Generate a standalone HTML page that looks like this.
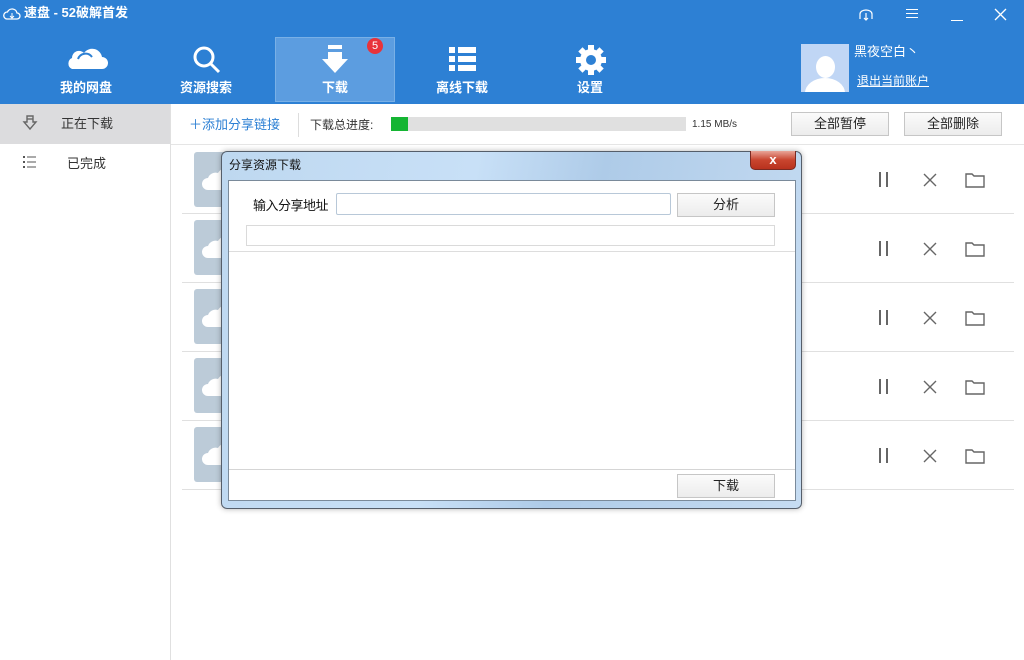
<!DOCTYPE html><html><head><meta charset="utf-8"><style>
*{margin:0;padding:0;box-sizing:border-box}
body{width:1024px;height:660px;overflow:hidden;background:#fff;font-family:"Liberation Sans","Noto Sans CJK SC",sans-serif;font-size:12px;color:#333;position:relative;line-height:1.2}
.a{position:absolute}
.hdr{left:0;top:0;width:1024px;height:104px;background:#2d80d4}
.nav{top:37px;width:120px;height:65px;color:#fff;font-weight:bold;font-size:13px;text-align:center}
.nav span{position:absolute;left:0;right:0;top:42px;line-height:18px}
.btn{background:linear-gradient(#fbfbfb,#ececec);border:1px solid #c6c6c6;text-align:center;font-size:13px;color:#222}
.row{left:182px;width:832px;height:1px;background:#e0e0e0}
.th{left:194px;width:55px;height:55px;background:#bccbd8;border-radius:3px;overflow:hidden}
.ic{stroke:#666;fill:none;stroke-width:1.4}
.t{line-height:18px}
</style></head><body>
<div class="a hdr"></div>
<svg class="a" style="left:3px;top:6px" width="18" height="16" viewBox="0 0 18 16"><path d="M4 13h10a3 3 0 0 0 0-6 5 5 0 0 0-9.5-1A3.5 3.5 0 0 0 4 13z" stroke="#fff" fill="none" stroke-width="1.3"/><path d="M9 7v5M7 10l2 2 2-2" stroke="#fff" fill="none"/></svg>
<div class="a t" style="left:24px;top:4px;color:#fff;font-weight:bold;font-size:13px">速盘 - 52破解首发</div>
<svg class="a" style="left:858px;top:9px" width="16" height="12"><path d="M2 10V5a6 4 0 0 1 12 0v5M8 4v7M6 9l2 2 2-2" stroke="#fff" fill="none" stroke-width="1.2"/></svg>
<div class="a" style="left:906px;top:9px;width:12px;height:9px;border-top:1px solid #fff;border-bottom:1px solid #fff"><div style="margin-top:3px;height:1px;background:#fff"></div></div>
<div class="a" style="left:951px;top:20px;width:12px;height:1px;background:#fff"></div>
<svg class="a" style="left:994px;top:8px" width="13" height="13"><path d="M1 1l11 11M12 1L1 12" stroke="#fff" stroke-width="1.3"/></svg>
<div class="a" style="left:275px;top:37px;width:120px;height:65px;background:#5c9de0;border:1px solid #79b0e6"></div>
<div class="a nav" style="left:26px"><svg class="a" style="left:38px;top:10px" width="44" height="26"><path d="M8 22h30a6 6 0 0 0 0-12 10 10 0 0 0-18-4 7 7 0 0 0-12 5 6 6 0 0 0 0 11z" fill="#fff"/><path d="M14 12a8 8 0 0 1 14-2" stroke="#2d80d4" stroke-width="2" fill="none"/></svg><span>我的网盘</span></div>
<div class="a nav" style="left:146px"><svg class="a" style="left:46px;top:8px" width="30" height="30"><circle cx="12" cy="12" r="9" stroke="#fff" stroke-width="3" fill="none"/><path d="M18 18l9 9" stroke="#fff" stroke-width="3"/></svg><span>资源搜索</span></div>
<div class="a nav" style="left:275px"><svg class="a" style="left:47px;top:8px" width="26" height="30"><rect x="6" y="0" width="14" height="4" fill="#fff"/><path d="M6 7h14v7h6L13 28 0 14h6z" fill="#fff"/></svg><span>下载</span></div>
<div class="a" style="left:367px;top:38px;width:16px;height:16px;border-radius:8px;background:#e8333a;color:#fff;font-size:11px;text-align:center;line-height:16px">5</div>
<div class="a nav" style="left:402px"><svg class="a" style="left:46px;top:8px" width="30" height="30"><g fill="#fff"><rect x="1" y="2" width="6" height="6"/><rect x="10" y="2" width="18" height="6"/><rect x="1" y="11" width="6" height="6"/><rect x="10" y="11" width="18" height="6"/><rect x="1" y="20" width="6" height="6"/><rect x="10" y="20" width="18" height="6"/></g></svg><span>离线下载</span></div>
<div class="a nav" style="left:530px"><svg class="a" style="left:45px;top:7px" width="32" height="32" viewBox="0 0 32 32"><g fill="#fff"><circle cx="16" cy="16" r="11"/><rect x="13" y="1" width="6" height="30"/><rect x="13" y="1" width="6" height="30" transform="rotate(45 16 16)"/><rect x="13" y="1" width="6" height="30" transform="rotate(90 16 16)"/><rect x="13" y="1" width="6" height="30" transform="rotate(135 16 16)"/></g><circle cx="16" cy="16" r="5" fill="#2d80d4"/></svg><span>设置</span></div>
<div class="a" style="left:801px;top:44px;width:48px;height:48px;background:#c0d6f5;overflow:hidden"><div class="a" style="left:15px;top:12px;width:19px;height:22px;border-radius:50%;background:#fff"></div><div class="a" style="left:4px;top:34px;width:40px;height:30px;border-radius:50%;background:#fff"></div></div>
<div class="a t" style="left:854px;top:43px;color:#fff;font-size:13px">黑夜空白丶</div>
<div class="a t" style="left:857px;top:72px;color:#fff;font-size:12px;text-decoration:underline">退出当前账户</div>
<div class="a" style="left:0;top:104px;width:170px;height:40px;background:#dcdcde"></div>
<div class="a" style="left:170px;top:104px;width:1px;height:556px;background:#e0e0e0"></div>
<svg class="a" style="left:22px;top:115px" width="16" height="16"><path d="M5 1h6v6h3L8 14 2 7h3z" class="ic" stroke-width="1.1"/><path d="M5 4h6" class="ic" stroke-width="1"/></svg>
<div class="a t" style="left:61px;top:115px;font-size:13px">正在下载</div>
<svg class="a" style="left:22px;top:155px" width="16" height="16"><g fill="#555"><rect x="1" y="1" width="2" height="2"/><rect x="1" y="6" width="2" height="2"/><rect x="1" y="11" width="2" height="2"/><rect x="5" y="1.5" width="9" height="1"/><rect x="5" y="6.5" width="9" height="1"/><rect x="5" y="11.5" width="9" height="1"/></g></svg>
<div class="a t" style="left:67px;top:155px;font-size:13px">已完成</div>
<div class="a t" style="left:189px;top:116px;color:#2d80d4;font-size:13px">＋添加分享链接</div>
<div class="a" style="left:298px;top:113px;width:1px;height:24px;background:#ddd"></div>
<div class="a t" style="left:310px;top:116px;font-size:12px">下载总进度:</div>
<div class="a" style="left:391px;top:117px;width:295px;height:14px;background:#e0e0e0"><div style="width:17px;height:14px;background:#15b533"></div></div>
<div class="a" style="left:692px;top:119px;font-size:10px">1.15 MB/s</div>
<div class="a btn" style="left:791px;top:112px;width:98px;height:24px;line-height:22px">全部暂停</div>
<div class="a btn" style="left:904px;top:112px;width:98px;height:24px;line-height:22px">全部删除</div>
<div class="a" style="left:171px;top:144px;width:853px;height:1px;background:#e5e5e5"></div>
<div class="a row" style="top:213px"></div><div class="a row" style="top:282px"></div><div class="a row" style="top:351px"></div><div class="a row" style="top:420px"></div><div class="a row" style="top:489px"></div>
<svg class="a" style="left:194px;top:152px" width="30" height="330"><defs><g id="c"><rect width="55" height="55" rx="3" fill="#bccbd8"/><path d="M14 38h30a7 7 0 0 0 0-14 11 11 0 0 0-20-3 8 8 0 0 0-10 5 6 6 0 0 0 0 12z" fill="#fff"/></g></defs><use href="#c"/><use href="#c" y="68"/><use href="#c" y="137"/><use href="#c" y="206"/><use href="#c" y="275"/></svg>
<svg class="a" style="left:870px;top:145px" width="130" height="345">
<defs><g id="r"><path d="M10 27v15M17 27v15" stroke="#666" stroke-width="2"/><path d="M54 29l12 12M66 29L54 41" class="ic"/><path d="M96 29h6l2 2h10v11H96z" class="ic" stroke-width="1.1"/></g></defs>
<use href="#r"/><use href="#r" y="69"/><use href="#r" y="138"/><use href="#r" y="207"/><use href="#r" y="276"/>
</svg>
<div class="a" style="left:221px;top:151px;width:581px;height:358px;border:1px solid #555e6a;border-radius:6px;background:linear-gradient(100deg,#bed8f0,#c8e0f7 40%,#aecbe8 60%,#c6dcf2);box-shadow:0 0 6px rgba(0,0,0,.3)"></div>
<div class="a t" style="left:229px;top:156px;font-size:12px;color:#111">分享资源下载</div>
<div class="a" style="left:750px;top:151px;width:46px;height:19px;border:1px solid #7a2a22;border-top:none;border-radius:0 0 5px 5px;background:linear-gradient(#e8a598,#c9452f 50%,#b8321e);color:#fff;font-weight:bold;text-align:center;line-height:18px;font-size:13px">x</div>
<div class="a" style="left:228px;top:180px;width:568px;height:321px;background:#fff;border:1px solid #7a8a9a"></div>
<div class="a t" style="left:253px;top:197px;font-size:13px;color:#111;letter-spacing:-0.5px">输入分享地址</div>
<div class="a" style="left:336px;top:193px;width:335px;height:22px;border:1px solid #b8c8d8;border-radius:2px"></div>
<div class="a btn" style="left:677px;top:193px;width:98px;height:24px;line-height:22px">分析</div>
<div class="a" style="left:246px;top:225px;width:529px;height:21px;border:1px solid #dadada"></div>
<div class="a" style="left:229px;top:251px;width:566px;height:1px;background:#ddd"></div>
<div class="a" style="left:229px;top:469px;width:566px;height:1px;background:#d5d5d5"></div>
<div class="a btn" style="left:677px;top:474px;width:98px;height:24px;line-height:22px">下载</div>
</body></html>
